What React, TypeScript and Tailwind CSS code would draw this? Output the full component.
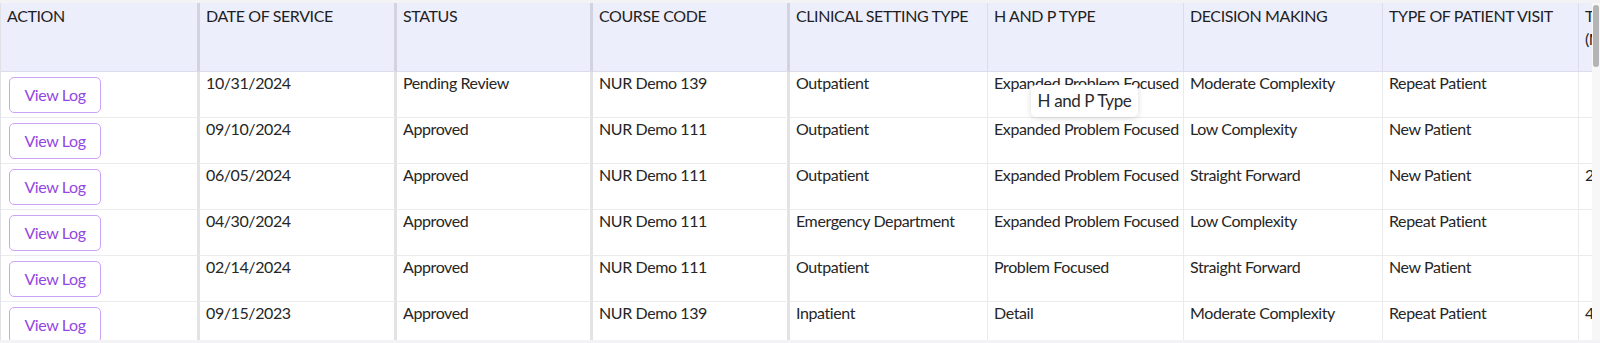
import React from 'react';

interface LogRow {
  date: string;
  status: string;
  course: string;
  setting: string;
  hpType: string;
  decision: string;
  visit: string;
  minutes: string;
}

const ROWS: LogRow[] = [
  { date: '10/31/2024', status: 'Pending Review', course: 'NUR Demo 139', setting: 'Outpatient', hpType: 'Expanded Problem Focused', decision: 'Moderate Complexity', visit: 'Repeat Patient', minutes: '' },
  { date: '09/10/2024', status: 'Approved', course: 'NUR Demo 111', setting: 'Outpatient', hpType: 'Expanded Problem Focused', decision: 'Low Complexity', visit: 'New Patient', minutes: '' },
  { date: '06/05/2024', status: 'Approved', course: 'NUR Demo 111', setting: 'Outpatient', hpType: 'Expanded Problem Focused', decision: 'Straight Forward', visit: 'New Patient', minutes: '20' },
  { date: '04/30/2024', status: 'Approved', course: 'NUR Demo 111', setting: 'Emergency Department', hpType: 'Expanded Problem Focused', decision: 'Low Complexity', visit: 'Repeat Patient', minutes: '' },
  { date: '02/14/2024', status: 'Approved', course: 'NUR Demo 111', setting: 'Outpatient', hpType: 'Problem Focused', decision: 'Straight Forward', visit: 'New Patient', minutes: '' },
  { date: '09/15/2023', status: 'Approved', course: 'NUR Demo 139', setting: 'Inpatient', hpType: 'Detail', decision: 'Moderate Complexity', visit: 'Repeat Patient', minutes: '45' },
];

const HEADERS = [
  'ACTION',
  'DATE OF SERVICE',
  'STATUS',
  'COURSE CODE',
  'CLINICAL SETTING TYPE',
  'H AND P TYPE',
  'DECISION MAKING',
  'TYPE OF PATIENT VISIT',
  'TIME WITH PATIENT (MINUTES)',
];

const headCls = (i: number) =>
  i < 4
    ? 'border-r-[3px] border-r-[#d3d3e0] border-b border-b-[#dcdcee]'
    : 'border-r border-r-[#dcdcec] border-b border-b-[#dcdcee]';

const bodyCls = (i: number) =>
  i < 4
    ? 'border-r-[3px] border-r-[#e3e3e5] border-b border-b-[#ebebed]'
    : 'border-r border-r-[#ebebed] border-b border-b-[#ebebed]';

const LogTable: React.FC = () => {
  return (
    <div className="relative h-[343px] w-[1600px] overflow-hidden bg-[#f3f3f5] pt-[3px] pb-[3px] font-['Lato',sans-serif] text-[16px] tracking-[-0.4px] text-[#262626]">
      <div className="flex h-full">
        <div className="flex-1 overflow-hidden border-l border-[#e2e2e6] bg-white">
          <div className="grid w-[1800px] grid-cols-[199px_197px_196px_197px_198px_196px_199px_196px_200px]">
            {HEADERS.map((h, i) => (
              <div key={h} className={`h-[69px] bg-[#edeefc] px-[6px] pt-[1px] leading-[23px] text-[#1f1f1f] ${headCls(i)}`}>
                {h}
              </div>
            ))}

            {ROWS.map((r, idx) => {
              const cells = [r.date, r.status, r.course, r.setting, r.hpType, r.decision, r.visit, r.minutes];
              return (
                <React.Fragment key={idx}>
                  <div className={`h-[46px] px-[6px] pt-[5px] ${bodyCls(0)}`}>
                    <button className="ml-[2px] flex h-[36px] w-[92px] items-center justify-center rounded-[5px] border border-[#cda3f5] bg-white text-[16px] text-[#9447e0]">
                      View Log
                    </button>
                  </div>
                  {cells.map((c, i) => (
                    <div key={i} className={`h-[46px] whitespace-nowrap px-[6px] leading-[22px] ${bodyCls(i + 1)}`}>
                      {c}
                    </div>
                  ))}
                </React.Fragment>
              );
            })}
          </div>
        </div>

        {/* vertical scrollbar */}
        <div className="w-[8px] flex-none bg-[#f7f7f7] pt-[2px]">
          <div className="mx-auto h-[62px] w-[6px] rounded-full bg-[#b4b4b4]" />
        </div>
      </div>

      {/* hover tooltip */}
      <div className="absolute left-[1031px] top-[85px] flex h-[32px] w-[107px] items-center justify-center rounded-[5px] bg-white text-[17px] text-[#2a2a2a] shadow-[0_1px_6px_rgba(0,0,0,0.15)]">
        H and P Type
      </div>
    </div>
  );
};

export default function App() {
  return <LogTable />;
}
